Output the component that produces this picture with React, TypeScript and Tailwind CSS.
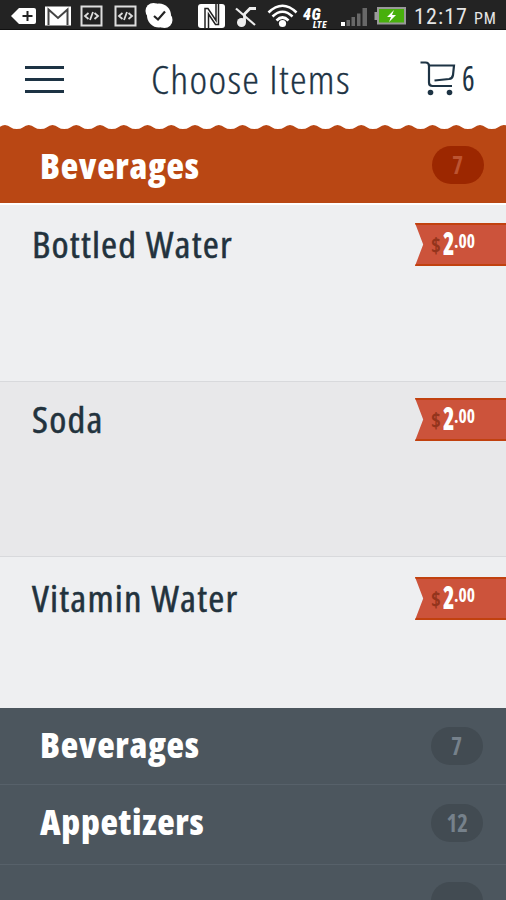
import clsx from "clsx";

interface MenuItem {
  name: string;
  dollars: string;
  cents: string;
  row: string;
}

interface Category {
  name: string;
  count: number;
  row: string;
  title: string;
}

const items: MenuItem[] = [
  { name: "Bottled Water", dollars: "2", cents: ".00", row: "h-[177px] pt-[18px] bg-[#eeeff1]" },
  { name: "Soda", dollars: "2", cents: ".00", row: "h-[175px] pt-[16px] bg-[#e8e8ea]" },
  { name: "Vitamin Water", dollars: "2", cents: ".00", row: "h-[151px] pt-[20px] bg-[#eeeff1]" },
];

const categories: Category[] = [
  { name: "Beverages", count: 7, row: "h-[77px]", title: "pt-[17px]" },
  { name: "Appetizers", count: 12, row: "h-[80px]", title: "pt-[17px]" },
];

function StatusBar() {
  return (
    <div className="flex h-[30px] shrink-0 items-center border-b border-[#111] bg-[#232323] text-white">
      <svg className="ml-[11px] h-[30px] w-[170px] shrink-0" viewBox="11 0 170 30">
        {/* back tag */}
        <path d="M11 16 L19 8 H34 Q36 8 36 10 V22 Q36 24 34 24 H19 Z" fill="#fff" />
        <path d="M27.500 11 V21 M22.500 16 H32.500" stroke="#222" strokeWidth="2" />
        {/* mail */}
        <rect x="45" y="6.500" width="26" height="19" fill="#fff" />
        <path d="M48.500 25 V9.500 L58 18 L67.500 9.500 V25" fill="none" stroke="#444" strokeWidth="2" />
        {/* code badges */}
        {[80.5, 114.5].map((x) => (
          <g key={x} transform={`translate(${x} 5.500)`}>
            <rect x="1" y="1" width="20" height="19" fill="#222" stroke="#ddd" strokeWidth="2" />
            <path d="M8 7.500 L4.500 10.500 L8 13.500 M14 7.500 L17.500 10.500 L14 13.500 M12.500 6.500 L9.500 14.500" fill="none" stroke="#ddd" strokeWidth="1.800" />
          </g>
        ))}
        {/* check */}
        <circle cx="159" cy="15.500" r="12" fill="#fff" />
        <circle cx="153.500" cy="11" r="8" fill="#fff" />
        <circle cx="164.500" cy="20" r="8" fill="#fff" />
        <path d="M154 16 L158 19.500 L165 11.500" fill="none" stroke="#222" strokeWidth="2.200" />
      </svg>
      <svg className="ml-[17px] h-[30px] w-[102px] shrink-0" viewBox="198 0 102 30">
        {/* nfc */}
        <rect x="198" y="4" width="27" height="24" rx="3" fill="#fff" />
        <path d="M205 28 V8.500 H208 L216 20.500 V4 M218.500 4 V24.500 H215.500 L208.500 14 V28" fill="none" stroke="#222" strokeWidth="1.500" />
        {/* muted note */}
        <path d="M236 8.500 L255 25" stroke="#eee" strokeWidth="2.200" />
        <path d="M244.500 22 V14 L250 8.500 H256" fill="none" stroke="#eee" strokeWidth="2.800" />
        <circle cx="241.500" cy="22.500" r="4.500" fill="#eee" />
        {/* wifi */}
        <g fill="none" stroke="#fff" strokeWidth="2.600">
          <path d="M268.500 12.500 Q282.500 -1 296.500 12.500" />
          <path d="M272.500 16.500 Q282.500 7 292.500 16.500" />
          <path d="M276.500 20.500 Q282.500 14.500 288.500 20.500" />
        </g>
        <circle cx="282.500" cy="23.500" r="3.600" fill="#fff" />
      </svg>
      <div className="ml-[3px] flex h-[30px] w-[29px] shrink-0 flex-col pt-[9px] font-['Roboto','Liberation_Sans',sans-serif] font-black italic">
        <span className="text-[16px] leading-[12px] tracking-[0.5px]">4G</span>
        <span className="pl-[10px] text-[9px] leading-[8px] tracking-[0.5px]">LTE</span>
      </div>
      <svg className="ml-[8px] h-[30px] w-[67px] shrink-0" viewBox="340 0 67 30">
        <rect x="341" y="22" width="4" height="4" fill="#fff" />
        <path d="M346.500 26 V20 H350 V26 Z M351.500 26 V17 H355 V26 Z M357 26 V13.500 H360.500 V26 Z M362.500 26 V8 H367 V26 Z" fill="#686868" />
        <rect x="378" y="8" width="27" height="15.500" fill="#48b00c" stroke="#999" strokeWidth="2" />
        <rect x="374.500" y="12" width="3" height="8" fill="#999" />
        <path d="M394 10 L387 17 H391 L389 22 L396 15 H392 Z" fill="#fff" />
      </svg>
      <div className="ml-[7px] flex items-baseline pt-[6px] font-['Roboto',sans-serif] text-[#e6e6e6]">
        <span className="w-[60px] text-[22px] leading-[28px] tracking-[1.1px]">12:17</span>
        <span className="text-[16px] leading-[28px] tracking-[0.8px]">PM</span>
      </div>
    </div>
  );
}

function CartIcon() {
  return (
    <svg className="h-[36px] w-[36px]" viewBox="0 0 36 36" fill="none" stroke="#1d3344" strokeWidth="2.200">
      <path d="M0.500 1.500 H5.500 Q9 1.500 9 5 V21.500 Q9 25 12.500 25 H32" />
      <path d="M9 4.500 H34 L33 14 Q32.500 17.500 29 18 L14.500 19.500" />
      <circle cx="10.500" cy="31.500" r="2.800" fill="#1d3344" stroke="none" />
      <circle cx="29.500" cy="31.500" r="2.800" fill="#1d3344" stroke="none" />
    </svg>
  );
}

function Scallops() {
  const period = 23.75;
  let d = "M-18.750 5 V4";
  for (let i = 0; i < 24; i++) {
    const x = -18.75 + i * period;
    d += ` Q${x + 4} 4 ${x + 6} 2.500 Q${x + 9} 0 ${x + 12} 0 Q${x + 15} 0 ${x + 18} 2.500 Q${x + 20} 4 ${x + period} 4`;
  }
  d += " V5 Z";
  return (
    <svg className="block h-[5px] w-full" viewBox="0 0 506 5" preserveAspectRatio="none">
      <path d={d} transform="translate(-12 0)" fill="#b94714" />
      <rect x="0" y="4" width="506" height="1" fill="#b94714" />
    </svg>
  );
}

function PriceTag({ item }: { item: MenuItem }) {
  return (
    <div className="flex h-[43px] w-[91px] shrink-0 border-y-2 border-[#c1410f] bg-[#cc533b] pl-[16px] [clip-path:polygon(0_0,100%_0,100%_100%,0_100%,9%_50%)]">
      <span className="w-[12px] origin-left scale-x-[0.95] pt-[7px] text-[22px] leading-[24px] font-bold text-[#93341c]">$</span>
      <span className="w-[11px] origin-left scale-x-[0.75] text-[31px] leading-[37px] font-extrabold text-white">{item.dollars}</span>
      <span className="origin-left scale-x-[0.88] pt-[4px] text-[20px] leading-[24px] font-bold text-white">{item.cents}</span>
    </div>
  );
}

function CountPill({ count, className }: { count?: number; className: string }) {
  return (
    <span className={clsx("flex h-[38px] w-[52px] shrink-0 items-center justify-center rounded-full text-[24px] font-bold", className)}>
      <span className="scale-x-[0.95]">{count}</span>
    </span>
  );
}

export default function App() {
  return (
    <div className="flex h-[900px] w-[506px] flex-col overflow-hidden bg-[#4c565e] font-['Open_Sans','Noto_Sans',sans-serif] [font-stretch:75%]">
      <StatusBar />

      <header className="flex h-[95px] shrink-0 bg-white text-[#1d3344]">
        <div className="ml-[25px] flex w-[126px] flex-col gap-[9px] pt-[36px]">
          <span className="h-[3px] w-[39px] bg-[#1d3344]" />
          <span className="h-[3px] w-[39px] bg-[#1d3344]" />
          <span className="h-[3px] w-[39px] bg-[#1d3344]" />
        </div>
        <h1 className="w-[269px] origin-left scale-x-[1.08] pt-[27px] text-[39px] leading-[44px] font-light tracking-[1.2px] whitespace-nowrap [-webkit-text-stroke:0.3px_#1d3344]">
          Choose Items
        </h1>
        <div className="flex">
          <div className="pt-[31px]">
            <CartIcon />
          </div>
          <span className="ml-[6px] origin-left scale-x-[0.85] pt-[26px] text-[35px] leading-[44px] font-medium">6</span>
        </div>
      </header>

      <div className="shrink-0 bg-white">
        <Scallops />
      </div>
      <section className="flex h-[75px] shrink-0 items-start justify-between border-b-2 border-white bg-[#b94714] pr-[22px] pl-[40px]">
        <h2 className="pt-[16px] text-[36px] leading-[40px] font-extrabold tracking-[0.7px] text-white">Beverages</h2>
        <CountPill count={7} className="mt-[16px] bg-[#9c2700] text-[#bd5431]" />
      </section>

      {items.map((item, i) => (
        <div key={item.name} className={clsx("flex shrink-0 items-start justify-between pl-[32px]", i < 2 && "border-b border-[#d8d9dc]", item.row)}>
          <span className="origin-left scale-x-[1.08] text-[36px] leading-[43px] font-normal tracking-[1.1px] whitespace-nowrap text-[#22323d] [-webkit-text-stroke:0.5px_#22323d]">
            {item.name}
          </span>
          <PriceTag item={item} />
        </div>
      ))}

      {categories.map((cat) => (
        <div key={cat.name} className={clsx("flex shrink-0 items-start justify-between border-b border-[#57616a] pr-[23px] pl-[40px]", cat.row)}>
          <h2 className={clsx("text-[36px] leading-[40px] font-extrabold tracking-[0.7px] text-white", cat.title)}>{cat.name}</h2>
          <CountPill count={cat.count} className="mt-[19px] bg-[#424b52] text-[#76818b]" />
        </div>
      ))}
      <div className="flex shrink-0 justify-end pr-[23px]">
        <CountPill className="mt-[17px] bg-[#424b52]" />
      </div>
    </div>
  );
}
